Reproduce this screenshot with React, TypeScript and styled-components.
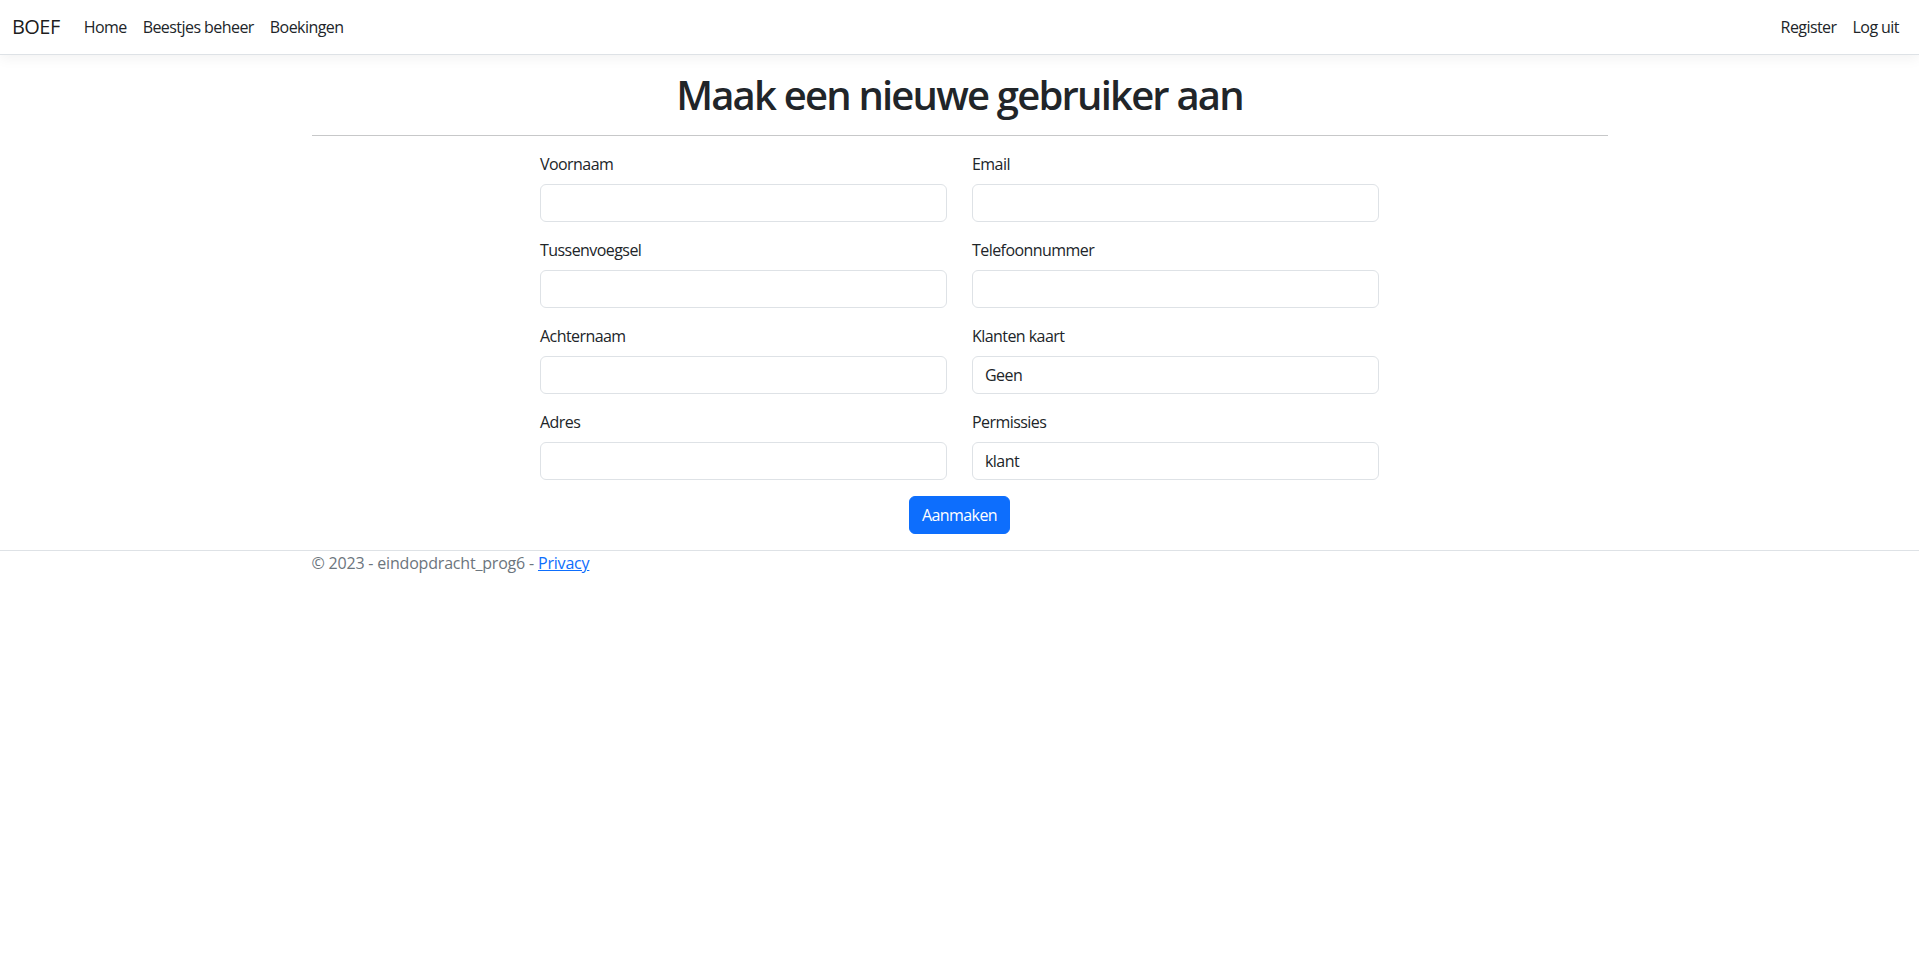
import styled, { createGlobalStyle } from "styled-components";

const GlobalStyle = createGlobalStyle`
	html, body {
		margin: 0;
		padding: 0;
		background: #fff;
	}

	body {
		font-family: "Open Sans", "Noto Sans", "Liberation Sans", sans-serif;
		font-size: 16px;
		line-height: 1.5;
		letter-spacing: -0.035em;
		color: #212529;
	}

	*, *::before, *::after {
		box-sizing: border-box;
	}
`;

const Navbar = styled.nav`
	display: flex;
	align-items: center;
	justify-content: space-between;
	height: 55px;
	padding: 0 12px;
	border-bottom: 1px solid #dee2e6;
	box-shadow: 0 4px 12px rgba(0, 0, 0, 0.05);
	background: #fff;
`;

const NavGroup = styled.div`
	display: flex;
	align-items: center;
`;

const Brand = styled.a`
	font-size: 20px;
	line-height: 30px;
	padding: 5px 0;
	margin-right: 16px;
	color: rgba(0, 0, 0, 0.9);
	text-decoration: none;
`;

const NavLink = styled.a`
	padding: 8px;
	color: #212529;
	text-decoration: none;
	cursor: pointer;
`;

const Main = styled.main`
	width: 1320px;
	margin: 16px auto 0;
	padding: 0 12px 16px;
`;

const Title = styled.h1`
	margin: 0 0 8px;
	font-size: 40px;
	line-height: 1.2;
	font-weight: 600;
	letter-spacing: -0.045em;
	text-align: center;
`;

const Rule = styled.hr`
	margin: 16px 0;
	border: 0;
	border-top: 1px solid #212529;
	opacity: 0.25;
`;

const Form = styled.form`
	display: flex;
	flex-direction: column;
	align-items: center;
`;

const Columns = styled.div`
	display: grid;
	grid-template-columns: 407px 407px;
	column-gap: 25px;
`;

const Column = styled.div`
	display: flex;
	flex-direction: column;
`;

const Field = styled.div`
	margin-bottom: 16px;
`;

const Label = styled.label`
	display: block;
	margin-bottom: 8px;
	line-height: 24px;
`;

const Input = styled.input`
	display: block;
	width: 100%;
	height: 38px;
	padding: 6px 12px;
	font: inherit;
	letter-spacing: inherit;
	color: #212529;
	background: #fff;
	border: 1px solid #dee2e6;
	border-radius: 6px;
	outline: none;
`;

const SubmitButton = styled.button`
	padding: 6px 12px;
	font: inherit;
	letter-spacing: inherit;
	line-height: 24px;
	color: #fff;
	background: #0d6efd;
	border: 1px solid #0d6efd;
	border-radius: 6px;
	cursor: pointer;
`;

const Footer = styled.footer`
	border-top: 1px solid #dee2e6;
	color: #6c757d;
	white-space: nowrap;
`;

const FooterInner = styled.div`
	width: 1320px;
	margin: 0 auto;
	padding: 0 12px;
	line-height: 24px;
	letter-spacing: -0.012em;

	& a {
		color: #0d6efd;
	}
`;

const leftFields = [
	{ label: "Voornaam", value: "" },
	{ label: "Tussenvoegsel", value: "" },
	{ label: "Achternaam", value: "" },
	{ label: "Adres", value: "" },
];

const rightFields = [
	{ label: "Email", value: "" },
	{ label: "Telefoonnummer", value: "" },
	{ label: "Klanten kaart", value: "Geen" },
	{ label: "Permissies", value: "klant" },
];

const FieldColumn = ({ fields }: { fields: { label: string; value: string }[] }) => (
	<Column>
		{fields.map((f) => (
			<Field key={f.label}>
				<Label>{f.label}</Label>
				<Input defaultValue={f.value} />
			</Field>
		))}
	</Column>
);

export default function App() {
	return (
		<>
			<GlobalStyle />
			<Navbar>
				<NavGroup>
					<Brand>BOEF</Brand>
					<NavLink>Home</NavLink>
					<NavLink>Beestjes beheer</NavLink>
					<NavLink>Boekingen</NavLink>
				</NavGroup>
				<NavGroup>
					<NavLink>Register</NavLink>
					<NavLink>Log uit</NavLink>
				</NavGroup>
			</Navbar>
			<Main>
				<Title>Maak een nieuwe gebruiker aan</Title>
				<Rule />
				<Form onSubmit={(e) => e.preventDefault()}>
					<Columns>
						<FieldColumn fields={leftFields} />
						<FieldColumn fields={rightFields} />
					</Columns>
					<SubmitButton type="submit">Aanmaken</SubmitButton>
				</Form>
			</Main>
			<Footer>
				<FooterInner>
					© 2023 - eindopdracht_prog6 - <a href="#">Privacy</a>
				</FooterInner>
			</Footer>
		</>
	);
}
